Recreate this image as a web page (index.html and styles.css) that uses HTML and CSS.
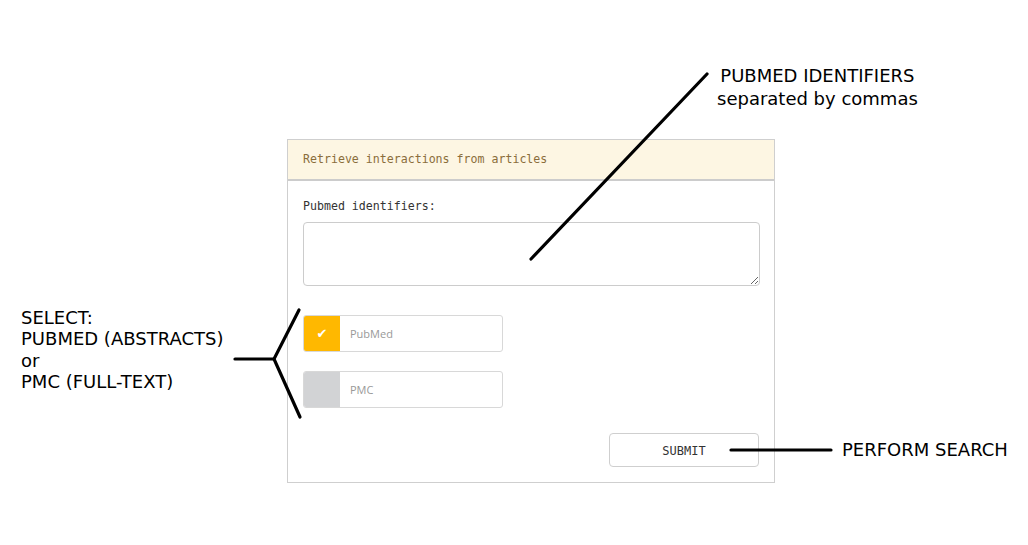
FILE: index.html
```html
<!DOCTYPE html>
<html>
<head>
<meta charset="utf-8">
<link rel="stylesheet" href="styles.css">
</head>
<body>
<div class="canvas">
  <div class="panel">
    <div class="panel-head">Retrieve interactions from articles</div>
    <div class="panel-body">
      <label class="field-label">Pubmed identifiers:</label>
      <textarea class="ids"></textarea>
      <div class="choice checked">
        <span class="box">✔</span>
        <span class="choice-text">PubMed</span>
      </div>
      <div class="choice">
        <span class="box"></span>
        <span class="choice-text">PMC</span>
      </div>
      <div class="actions">
        <button class="submit">SUBMIT</button>
      </div>
    </div>
  </div>

  <div class="note note-ids">PUBMED IDENTIFIERS<br><span class="sub">separated by commas</span></div>
  <div class="note note-select">SELECT:<br>PUBMED (ABSTRACTS)<br>or<br>PMC (FULL-TEXT)</div>
  <div class="note note-search">PERFORM SEARCH</div>

  <svg class="arrows" width="1028" height="545" viewBox="0 0 1028 545">
    <g stroke="#000" stroke-width="3.2" stroke-linecap="round" fill="none">
      <line x1="531" y1="259" x2="707" y2="74"/>
      <polyline points="299,310 274,359 300,417"/>
      <line x1="235" y1="359" x2="274" y2="359"/>
      <line x1="731" y1="450" x2="831" y2="450"/>
    </g>
  </svg>
</div>
</body>
</html>
```
FILE: styles.css
```css
html, body {
  margin: 0;
  padding: 0;
  background: #fff;
}
.canvas {
  position: relative;
  width: 1028px;
  height: 545px;
  overflow: hidden;
  padding-top: 139px;
  box-sizing: border-box;
}
.panel {
  margin-left: 287px;
  width: 488px;
  height: 344px;
  box-sizing: border-box;
  border: 1px solid #cfcfcf;
  font-family: "DejaVu Sans Mono", "Liberation Mono", monospace;
}
.panel-head {
  height: 39px;
  background: #fdf6e3;
  border-bottom: 2px solid #cccccc;
  color: #8a6d3b;
  font-size: 11.6px;
  line-height: 39px;
  padding-left: 15px;
}
.panel-body {
  padding: 18px 15px 0 15px;
  display: flex;
  flex-direction: column;
  align-items: flex-start;
}
.field-label {
  font-size: 11.6px;
  line-height: 14px;
  color: #333;
  height: 14px;
}
.ids {
  margin-top: 9px;
  width: 457px;
  height: 64px;
  box-sizing: border-box;
  border: 1px solid #cccccc;
  border-radius: 4px;
  resize: vertical;
  font: inherit;
  outline: none;
}
.choice {
  display: flex;
  align-items: center;
  width: 200px;
  height: 37px;
  box-sizing: border-box;
  border: 1px solid #d8d8d8;
  border-radius: 3px;
  overflow: hidden;
  margin-top: 19px;
}
.ids + .choice {
  margin-top: 29px;
}
.box {
  width: 36px;
  height: 100%;
  background: #d2d3d5;
  color: #fff;
  display: flex;
  align-items: center;
  justify-content: center;
  font-family: "DejaVu Sans", sans-serif;
  font-size: 13px;
  font-weight: bold;
}
.checked .box {
  background: #ffb800;
}
.choice-text {
  margin-left: 10px;
  font-family: "Open Sans", "DejaVu Sans", sans-serif;
  font-size: 11px;
  color: #999;
}
.actions {
  align-self: stretch;
  display: flex;
  justify-content: flex-end;
  margin-top: 25px;
}
.submit {
  width: 150px;
  height: 34px;
  background: #fff;
  border: 1px solid #cfcfcf;
  border-radius: 4px;
  font-family: "DejaVu Sans Mono", "Liberation Mono", monospace;
  font-size: 12px;
  color: #333;
  padding: 0;
  padding-top: 1px;
}
.note {
  position: absolute;
  font-family: "DejaVu Sans", Verdana, sans-serif;
  font-size: 18px;
  color: #000;
  white-space: nowrap;
}
.note-ids {
  left: 717px;
  top: 64px;
  line-height: 23px;
  text-align: center;
}
.note-select {
  left: 21px;
  top: 307px;
  line-height: 21.4px;
}
.note-search {
  left: 842px;
  top: 438px;
  line-height: 23px;
}
.arrows {
  position: absolute;
  left: 0;
  top: 0;
  pointer-events: none;
}
```
